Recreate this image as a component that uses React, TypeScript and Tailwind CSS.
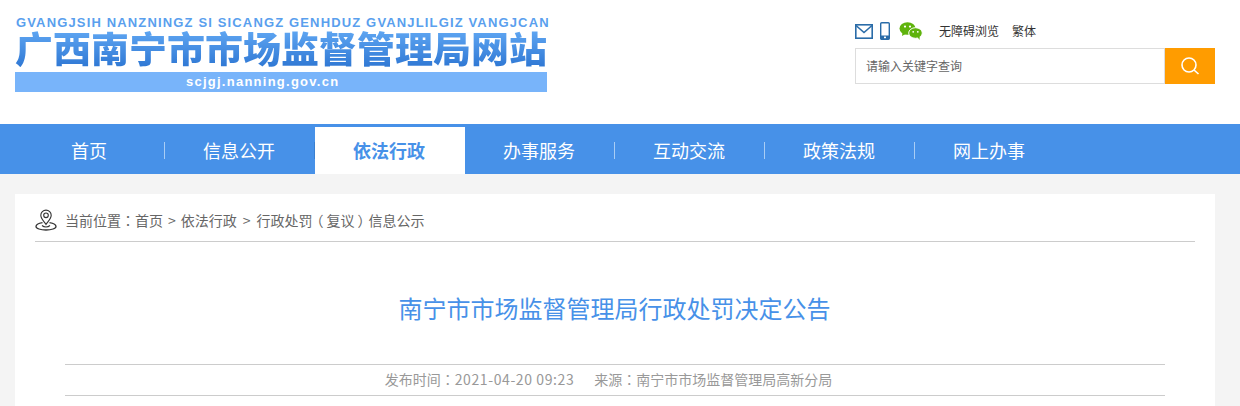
import React from "react";

const cjk = { fontFamily: '"Noto Sans CJK SC", "Liberation Sans", sans-serif' };
const tc = { fontFamily: '"Noto Sans CJK TC", sans-serif' };
const latin = { fontFamily: '"Liberation Sans", sans-serif' };
const nav = ["首页", "信息公开", "依法行政", "办事服务", "互动交流", "政策法规", "网上办事"];

function Mail() {
  return (
    <svg width="18" height="15" viewBox="0 0 18 15" fill="none" stroke="#2a6ca8" strokeWidth="1.6">
      <rect x="0.8" y="0.8" width="16.4" height="13.4" />
      <path d="M1 1.5 9 8.5 17 1.5" />
    </svg>
  );
}
function Phone() {
  return (
    <svg width="10" height="18" viewBox="0 0 10 18" fill="none">
      <rect x="0.7" y="0.7" width="8.6" height="16.6" rx="1" stroke="#2a6ca8" strokeWidth="1.4" />
      <rect x="0.7" y="13.5" width="8.6" height="3.8" fill="#2a6ca8" />
      <rect x="4" y="14.6" width="2" height="1.6" fill="#fff" />
    </svg>
  );
}
function Wechat() {
  return (
    <svg width="24" height="18" viewBox="0 0 24 18">
      <ellipse cx="8.5" cy="6.5" rx="8" ry="6.3" fill="#5fb30c" />
      <path d="M3.5 10.5 3 14l3.800-2.200z" fill="#5fb30c" />
      <ellipse cx="16.5" cy="11" rx="6.8" ry="5.3" fill="#5fb30c" stroke="#fff" strokeWidth="1" />
      <path d="M18.5 15l2 3 .2-4z" fill="#5fb30c" />
      <circle cx="6" cy="4.6" r="1.1" fill="#fff" />
      <circle cx="11" cy="4.6" r="1.1" fill="#fff" />
      <circle cx="14.2" cy="9.8" r="0.9" fill="#fff" />
      <circle cx="18.8" cy="9.8" r="0.9" fill="#fff" />
    </svg>
  );
}
function Pin() {
  return (
    <svg width="22" height="22" viewBox="0 0 22 22" fill="none" stroke="#333" strokeWidth="1.1">
      <path d="M11 15.5C8.500 12 5.800 9.500 5.800 6.300a5.200 5.200 0 0 1 10.400 0c0 3.200-2.700 5.700-5.200 9.200z" />
      <circle cx="11" cy="6.3" r="2.3" />
      <path d="M7.500 13.600C3.500 14.200 1 15.700 1 17.500c0 2 4.500 3.500 10 3.500s10-1.500 10-3.500c0-1.800-2.500-3.300-6.500-3.900" strokeWidth="1.3" />
      <path d="M7 16.500c1 .9 2.500 1.500 4 1.500s3-.6 4-1.500" />
    </svg>
  );
}

export default function App() {
  return (
    <div className="flex h-[406px] flex-col overflow-hidden bg-[#f4f4f4]" style={cjk}>
      <header className="h-[124px] shrink-0 bg-white">
        <div className="ml-[15px] flex w-[1200px] justify-between">
          <div className="w-[534px] pt-[14px]">
            <div className="ml-[1px] h-[17px] whitespace-nowrap text-[13px] leading-[17px] font-bold tracking-[1.15px] text-[#5a9fee]" style={latin}>
              GVANGJSIH NANZNINGZ SI SICANGZ GENHDUZ GVANJLILGIZ VANGJCAN
            </div>
            <div className="flex h-[41px] items-start">
              <div className="-mt-[4px] scale-y-[0.95] whitespace-nowrap bg-gradient-to-b from-[#62a9f4] to-[#2f78d4] bg-clip-text text-[38px] leading-[41px] font-black text-transparent">
                广西南宁市市场监督管理局网站
              </div>
            </div>
            <div className="h-[20px] w-[532px] bg-[#78b4fa] pl-[171px] text-[13px] leading-[20px] font-bold tracking-[1.25px] text-white" style={latin}>
              scjgj.nanning.gov.cn
            </div>
          </div>
          <div className="w-[360px] pt-[21px]">
            <div className="flex h-[20px] items-center text-[12px] text-[#333]">
              <span className="flex w-[25px] items-center"><Mail /></span>
              <span className="flex w-[19px] items-center"><Phone /></span>
              <span className="flex w-[40px] items-center"><Wechat /></span>
              <span className="w-[73px]">无障碍浏览</span>
              <span>繁体</span>
            </div>
            <div className="mt-[7px] flex h-[36px]">
              <div className="flex flex-1 items-center border border-[#dddddd] pl-[10px] text-[12px] text-[#666]">
                请输入关键字查询
              </div>
              <div className="flex w-[50px] items-center justify-center bg-[#ff9c00]">
                <svg width="20" height="20" viewBox="0 0 20 20" fill="none" stroke="#fff" strokeWidth="1.6">
                  <circle cx="9" cy="9" r="7" />
                  <path d="M14 14l4.500 4" />
                </svg>
              </div>
            </div>
          </div>
        </div>
      </header>

      <nav className="h-[50px] shrink-0 bg-[#4791e8]">
        <ul className="ml-[15px] flex h-full w-[1200px]">
          {nav.map((n, i) => (
            <li
              key={n}
              className={
                i === 2
                  ? "mt-[3px] flex h-[47px] w-[150px] items-center justify-center bg-white text-[18px] font-bold text-[#4791e8]"
                  : "relative flex h-full w-[150px] items-center justify-center pt-[2px] text-[18px] text-white"
              }
            >
              <span className="-ml-[2px]">{n}</span>
              {i !== 2 && i !== 6 && i !== 1 && (
                <span className="absolute right-[0px] top-[18px] h-[17px] w-px bg-[#a9cdf5]" />
              )}
              {i === 1 && <span className="absolute right-[0px] top-[18px] h-[17px] w-px bg-[#3a7fd0]" />}
            </li>
          ))}
        </ul>
      </nav>

      <main className="ml-[15px] mt-[20px] w-[1200px] flex-1 bg-white px-[20px]">
        <div className="flex h-[48px] items-center gap-[8px] border-b border-[#cccccc] pt-[4px] text-[14px] text-[#666]">
          <Pin />
          <span className="whitespace-nowrap pt-[2px]">
            当前位置<span style={tc}>：</span>首页<span className="mx-[5px]">&gt;</span>依法行政<span className="mx-[5px] ml-[6px] mr-[6px]">&gt;</span>行政处罚
            <span className="ml-[-3px] mr-[3px] inline-block">（</span>复议
            <span className="ml-[3px] mr-[-3px] inline-block">）</span>信息公示
          </span>
        </div>
        <div className="px-[30px]">
          <h1 className="mt-[48px] h-[74px] pr-[1px] text-center text-[24px] leading-[36px] font-normal text-[#4791e8]">
            南宁市市场监督管理局行政处罚决定公告
          </h1>
          <div className="flex h-[32px] items-center justify-center gap-[20px] border-y border-[#cccccc] pb-[1px] pr-[13px] text-[14px] text-[#999]">
            <span>
              发布时间<span style={tc}>：</span><span className="tracking-[0.6px]">2021-04-20 09:23</span>
            </span>
            <span>
              来源<span style={tc}>：</span>南宁市市场监督管理局高新分局
            </span>
          </div>
        </div>
      </main>
    </div>
  );
}
